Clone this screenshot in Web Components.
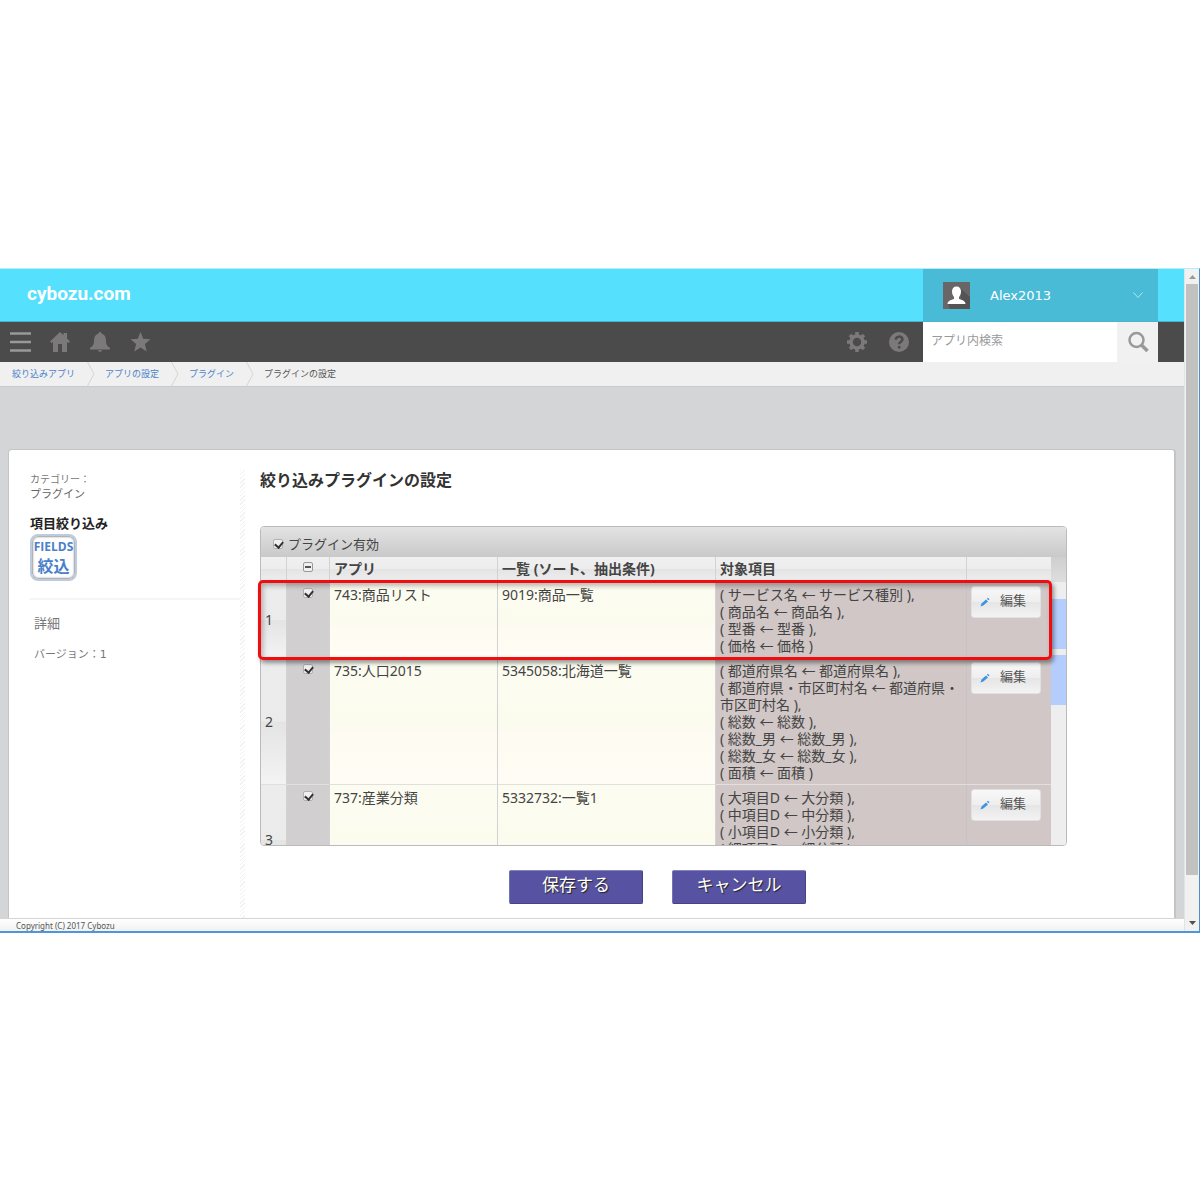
<!DOCTYPE html>
<html lang="ja">
<head>
<meta charset="utf-8">
<title>絞り込みプラグインの設定</title>
<style>
body { margin: 0; background: #fff; color: #444; font: 13px/17px "DejaVu Sans", "Noto Sans CJK JP", sans-serif; }
</style>
</head>
<body>
<cy-window>
  <cy-header user="Alex2013"></cy-header>
  <cy-toolbar></cy-toolbar>
  <cy-breadcrumb></cy-breadcrumb>
  <cy-card>
    <cy-sidebar slot="side"></cy-sidebar>
    <plugin-settings></plugin-settings>
  </cy-card>
  <cy-footer slot="footer">Copyright (C) 2017 Cybozu</cy-footer>
</cy-window>
<script>
const define = (name, html, setup) => customElements.define(name, class extends HTMLElement {
  constructor() {
    super();
    this.attachShadow({ mode: 'open' });
  }
  connectedCallback() {
    this.shadowRoot.innerHTML = '<style>*{box-sizing:border-box}button,input{font:inherit;color:inherit;margin:0}</style>' + html;
    if (setup) setup(this, this.shadowRoot);
  }
});

define('cy-window', `
<style>
:host { display: block; padding-top: 268px; }
.frame { display: flex; height: 665px; border-style: solid; border-width: 1px 1px 2px 0; border-color: #b5eefb #4b8fd0 #4a97dc; }
.view { flex: 1; min-width: 0; display: flex; flex-direction: column; background: #d3d5d7; }
.content { flex: 1; min-height: 0; overflow: hidden; display: flex; flex-direction: column; }
.bar { width: 15px; background: #f1f1f1; display: flex; flex-direction: column; align-items: center; border-left: 1px solid #e4e4e4; }
.bar svg { width: 14px; height: 15px; display: block; }
.thumb { width: 12px; height: 591px; background: #c1c1c1; }
.rest { flex: 1; }
</style>
<div class="frame">
  <div class="view"><div class="content"><slot></slot></div><slot name="footer"></slot></div>
  <div class="bar">
    <svg viewBox="0 0 14 15"><path d="M4 10h7L7.500 6z" fill="#999"/></svg>
    <div class="thumb"></div><div class="rest"></div>
    <svg viewBox="0 0 14 15"><path d="M4 5h7L7.500 9z" fill="#505050"/></svg>
  </div>
</div>`);

define('cy-header', `
<style>
:host { display: flex; box-sizing: border-box; justify-content: space-between; height: 53px; flex: none; background: #55e0fd; padding: 0 26px 0 27px; border-bottom: 1px solid #46b4cb; }
.logo { color: #fff; text-decoration: none; font: 700 19px/50px Roboto, sans-serif; }
button { width: 235px; border: 0; padding: 0 14px 0 20px; background: #49bbd7; color: #fff; display: flex; align-items: center; text-align: left; }
.face { width: 27px; height: 27px; margin-right: 20px; }
.name { flex: 1; }
.down { width: 12px; height: 8px; }
</style>
<a class="logo" href="#">cybozu.com</a>
<button type="button">
  <svg class="face" viewBox="0 0 27 27"><path fill="#696667" d="M0 0h27v27H0z"/><path fill="#555354" d="M17 6l10 9v12H7l-2-5 13-4z"/><path fill="#fff" d="M13.500 4.500c3 0 4.500 2 4.500 5 0 2.500-1 4.200-2 5.500v2c2.500 1 6.500 1.600 6.500 5h-18c0-3.400 4-4 6.500-5v-2c-1-1.300-2-3-2-5.500 0-3 1.500-5 4.500-5z"/></svg>
  <span class="name"></span>
  <svg class="down" viewBox="0 0 12 8"><path d="M1.500 1.500L6 6.500l4.500-5" fill="none" stroke="#b5e6f3"/></svg>
</button>`, (el, root) => { root.querySelector('.name').textContent = el.getAttribute('user'); });

define('cy-toolbar', `
<style>
:host { display: flex; box-sizing: border-box; height: 40px; flex: none; background: #4b4b4b; padding: 0 26px 0 9px; align-items: stretch; }
nav { display: flex; flex: 1; align-items: center; gap: 18px; }
nav .push { margin-left: auto; }
nav button { width: 22px; height: 24px; padding: 0; border: 0; background: none; }
nav svg { width: 22px; height: 22px; display: block; }
nav .help { margin: 0 13px 0 2px; }
form { display: flex; width: 235px; }
input { flex: 1; min-width: 0; border: 0; padding: 0 8px 1px; background: #fff; font-size: 12px; outline: 0; }
input::placeholder { color: #999; opacity: 1; }
form button { width: 41px; border: 0; padding: 0; background: #f1f1f1; display: flex; align-items: center; justify-content: center; }
form svg { width: 22px; height: 22px; }
</style>
<nav>
  <button class="menu" aria-label="メニュー"><svg viewBox="0 0 22 22"><path d="M1 2.500h21M1 11h21M1 19.500h21" stroke="#999" stroke-width="2.500"/></svg></button>
  <button aria-label="ホーム"><svg viewBox="0 0 22 22" fill="#7c797a"><path d="M11 1l3.500 3.300V2H18v5.500l3 3-1.500 1.500-1.500-1v10h-5v-8H9v8H4V11l-1.500 1L1 10.500z"/></svg></button>
  <button aria-label="通知"><svg viewBox="0 0 22 22" fill="#7c797a"><path d="M9.500 2.500c0-2 3-2 3 0 3 1 4.500 3.500 4.500 7 0 4 1 5.500 4 7.500v1.500H1V17c3-2 4-3.500 4-7.500 0-3.500 1.500-6 4.500-7zM9 19.300h4c0 2-4 2-4 0z"/></svg></button>
  <button aria-label="お気に入り"><svg viewBox="0 0 22 22" fill="#7c797a"><path d="M11.500 1l2.700 6.800 7.300.5-5.600 4.700 1.800 7.500-6.200-4-6.200 4 1.800-7.500L1.500 8.300l7.300-.5z"/></svg></button>
  <button class="push" aria-label="設定"><svg viewBox="0 0 22 22"><g transform="translate(11 11)" fill="none" stroke="#7c797a"><circle r="6" stroke-width="3.500"/><path stroke-width="3.600" d="M0-7V-10M0 7V10M7 0H10M-7 0H-10M5-5l2-2M5 5l2 2M-5 5l-2 2M-5-5l-2-2"/></g></svg></button>
  <button class="help" aria-label="ヘルプ"><svg viewBox="0 0 22 22"><circle cx="11" cy="11" r="10" fill="#7c797a"/><path d="M7.800 8.800c0-4.300 6.700-4 6.700-.5 0 2.400-3.300 2.500-3.300 5M11.200 15v2.600" fill="none" stroke="#4b4b4b" stroke-width="2.500"/></svg></button>
</nav>
<form><input type="text" aria-label="アプリ内検索" placeholder="アプリ内検索"><button type="button" aria-label="検索"><svg viewBox="0 0 22 22" fill="none" stroke="#999"><circle cx="9.500" cy="9" r="7" stroke-width="2.500"/><path d="M14.500 14l6 6" stroke-width="3.500"/></svg></button></form>`);

define('cy-breadcrumb', `
<style>
:host { display: block; box-sizing: border-box; height: 25px; flex: none; background: #f0f0f0; border-bottom: 1px solid #c9cbcc; }
nav { display: flex; height: 24px; padding-left: 12px; font-size: 9px; line-height: 24px; color: #555; }
a { color: #4b83c8; text-decoration: none; display: flex; }
svg { width: 8px; height: 24px; margin: 0 10px 0 12px; }
</style>
<nav></nav>`, (el, root) => {
  const arrow = '<svg viewBox="0 0 8 24"><path d="M.5 0l6.500 12L.5 24" fill="none" stroke="#d5d5d5"/></svg>';
  root.querySelector('nav').innerHTML = ['絞り込みアプリ', 'アプリの設定', 'プラグイン'].map(t => `<a href="#">${t}${arrow}</a>`).join('') + '<span>プラグインの設定</span>';
});

define('cy-card', `
<style>
:host { display: flex; flex: 1; margin: 62px 8px 0 8px; background: #fff; border: 1px solid #c2c4c5; border-right-width: 2px; border-bottom: 0; border-radius: 4px 4px 0 0; padding-top: 20px; }
.side { width: 231px; padding-left: 21px; flex: none; }
.hatch { width: 5px; flex: none; background: repeating-linear-gradient(135deg, #f1f1f1 0 1px, #fff 1px 3px); }
.main { flex: 1; min-width: 0; padding: 0 107px 0 15px; }
</style>
<div class="side"><slot name="side"></slot></div><div class="hatch"></div><div class="main"><slot></slot></div>`);

define('cy-sidebar', `
<style>
:host { display: block; padding-top: 2px; color: #777; }
.cat { font-size: 10px; line-height: 15px; }
.cat b { display: block; font-size: 11px; font-weight: 400; color: #666; }
h2 { margin: 12px 0 0; font-size: 13px; line-height: 20px; color: #222; }
.icon { width: 47px; height: 47px; border: 2px solid #bccbdf; border-radius: 8px; box-shadow: inset 0 0 2px 1px #999; color: #4a7fcb; text-align: center; font: 700 12px/18px "Open Sans", sans-serif; padding-top: 2px; }
.icon span { display: block; font: 700 16px/18px "Noto Sans CJK JP", sans-serif; }
.detail { margin-top: 17px; border-top: 2px solid #f5f5f5; padding: 15px 4px; }
.detail p { margin: 0 0 14px; }
.detail .v { font-size: 11px; }
</style>
<div class="cat">カテゴリー：<b>プラグイン</b></div>
<h2>項目絞り込み</h2>
<div class="icon">FIELDS<span>絞込</span></div>
<div class="detail"><p>詳細</p><p class="v">バージョン：1</p></div>`);

define('edit-button', `
<style>
:host { display: block; }
button { width: 70px; height: 32px; border: 1px solid #e2e0e0; border-radius: 3px; background: linear-gradient(#f8f8f8 0, #eee 50%, #e5e5e5 50%, #f3f3f3); color: #555; font-size: 13px; padding: 0 14px 3px 8px; display: flex; align-items: center; justify-content: space-between; }
svg { width: 10px; height: 10px; margin-top: 3px; }
</style>
<button type="button"><svg viewBox="0 0 10 10"><path d="M.5 9.500l1-3L6 2.500l2 2-4.700 4zM6.800 1.800L8 .8l1.500 1.500-1 1z" fill="#3d94e0"/></svg><slot></slot></button>`);

define('plugin-settings', `
<style>
:host { display: block; }
h1 { margin: 0 0 34px; font-size: 16px; line-height: 22px; color: #333; }
.wrap { position: relative; }
.panel { height: 320px; overflow: hidden; border: 1px solid #bbb; border-radius: 4px; }
.cap { display: flex; align-items: center; height: 30px; padding: 4px 0 0 12px; background: linear-gradient(#e3e3e3, #c9c9c9); color: #444; }
.cap label { padding-left: 5px; }
input { appearance: none; display: block; width: 10px; height: 10px; border: 1px solid #b0b0b0; border-radius: 2px; background: #f0f0f0; }
input:checked::before { content: ""; display: block; width: 4px; height: 6px; margin: 0 0 0 2px; border: solid #333; border-width: 0 2px 2px 0; transform: rotate(40deg); }
input.some { border-color: #999; }
input.some::before { content: ""; display: block; height: 2px; margin: 3px 1px; background: #555; }
.body { display: flex; }
table { flex: 1; min-width: 0; width: 0; table-layout: fixed; border-collapse: separate; border-spacing: 0; font: 14px/17px "Noto Sans", "Noto Sans CJK JP", sans-serif; }
.n { width: 26px; } .c { width: 43px; } .a { width: 168px; } .l { width: 218px; } .e { width: 84px; }
th, td { text-align: left; vertical-align: top; padding: 4px; border-right: 1px solid #d2d2d2; border-bottom: 1px solid #e2e0df; }
thead th { height: 25px; padding: 3px 4px; background: linear-gradient(#f0f0f0 0, #ededed 48%, #e4e4e4 52%, #eee); border-bottom-color: #ccc; }
th:last-child, td:last-child { border-right: 0; }
tbody th { vertical-align: middle; font-weight: 400; background: linear-gradient(#ececec 0, #ebebeb 50%, #e4e4e4 51%, #f3f3f3); }
td.c { background: #d2cfd0; }
.c input { margin: 2px auto 0 12px; }
td.a, td.l { background: linear-gradient(#fcfcf1, #fbfbee 50%, #fefbf2 60%, #fffcf5); }
td.t, td.e { background: #d0c7c6; border-right-color: #c5c5c9; }
td.t { padding: 4px 3px 3px 4px; }
td.e { padding: 4px; }
.rail { width: 15px; background: #eee; display: flex; flex-direction: column; }
.rail i { display: block; height: 50px; background: #b5cdfc; margin-bottom: 6px; }
.rail b { display: block; height: 25px; margin-bottom: 17px; background: linear-gradient(#cfcfcf, #dedede); }
.mark { position: absolute; left: -2px; right: 15px; top: 54px; height: 80px; border: 3px solid #f00d10; border-radius: 5px; box-shadow: 2px 3px 4px #0006, inset 2px 3px 5px #0004; pointer-events: none; }
.actions { display: flex; justify-content: center; gap: 29px; padding: 24px 12px 0 0; }
.actions button { width: 134px; height: 34px; border: 1px solid #454384; border-top-color: #8383bc; border-left-color: #7373b0; border-radius: 2px; background: #5752a1; color: #fff; font-size: 17px; padding: 0 0 3px; text-shadow: 1px 1px 1px #222; }
</style>
<h1>絞り込みプラグインの設定</h1>
<div class="wrap">
  <div class="panel">
    <div class="cap"><input type="checkbox" id="on" checked><label for="on">プラグイン有効</label></div>
    <div class="body">
      <table>
        <thead><tr><th class="n"></th><th class="c"><input class="some" type="checkbox" aria-label="すべて選択"></th><th class="a">アプリ</th><th class="l">一覧 (ソート、抽出条件)</th><th class="t">対象項目</th><th class="e"></th></tr></thead>
        <tbody></tbody>
      </table>
      <div class="rail"><b></b><i></i><i></i></div>
    </div>
  </div>
  <div class="mark"></div>
</div>
<div class="actions"><button type="button">保存する</button><button type="button">キャンセル</button></div>`, (el, root) => {
  const rows = [
    ['743:商品リスト', '9019:商品一覧', [['サービス名', 'サービス種別'], ['商品名', '商品名'], ['型番', '型番'], ['価格', '価格']]],
    ['735:人口2015', '5345058:北海道一覧', [['都道府県名', '都道府県名'], ['都道府県・市区町村名', '都道府県・市区町村名'], ['総数', '総数'], ['総数_男', '総数_男'], ['総数_女', '総数_女'], ['面積', '面積']]],
    ['737:産業分類', '5332732:一覧1', [['大項目D', '大分類'], ['中項目D', '中分類'], ['小項目D', '小分類'], ['細項目D', '細分類'], ['', ''], ['', '']]]
  ];
  root.querySelector('tbody').innerHTML = rows.map(([app, list, pairs], i) => {
    const lines = pairs.map(([to, from], k) => to ? `( ${to} ← ${from} )${k < pairs.length - 1 ? ',' : ''}` : '&nbsp;').join('<br>');
    return `<tr><th class="n" scope="row">${i + 1}</th><td class="c"><input type="checkbox" checked aria-label="${app}"></td><td class="a">${app}</td><td class="l">${list}</td><td class="t">${lines}</td><td class="e"><edit-button>編集</edit-button></td></tr>`;
  }).join('');
});

define('cy-footer', `
<style>
:host { display: block; box-sizing: border-box; height: 13px; flex: none; border-top: 1px solid #d5d5d5; background: linear-gradient(#fff, #f1f1f1); padding-left: 16px; font: 8px/13px "Noto Sans", sans-serif; color: #555; }
</style><slot></slot>`);
</script>
</body>
</html>
